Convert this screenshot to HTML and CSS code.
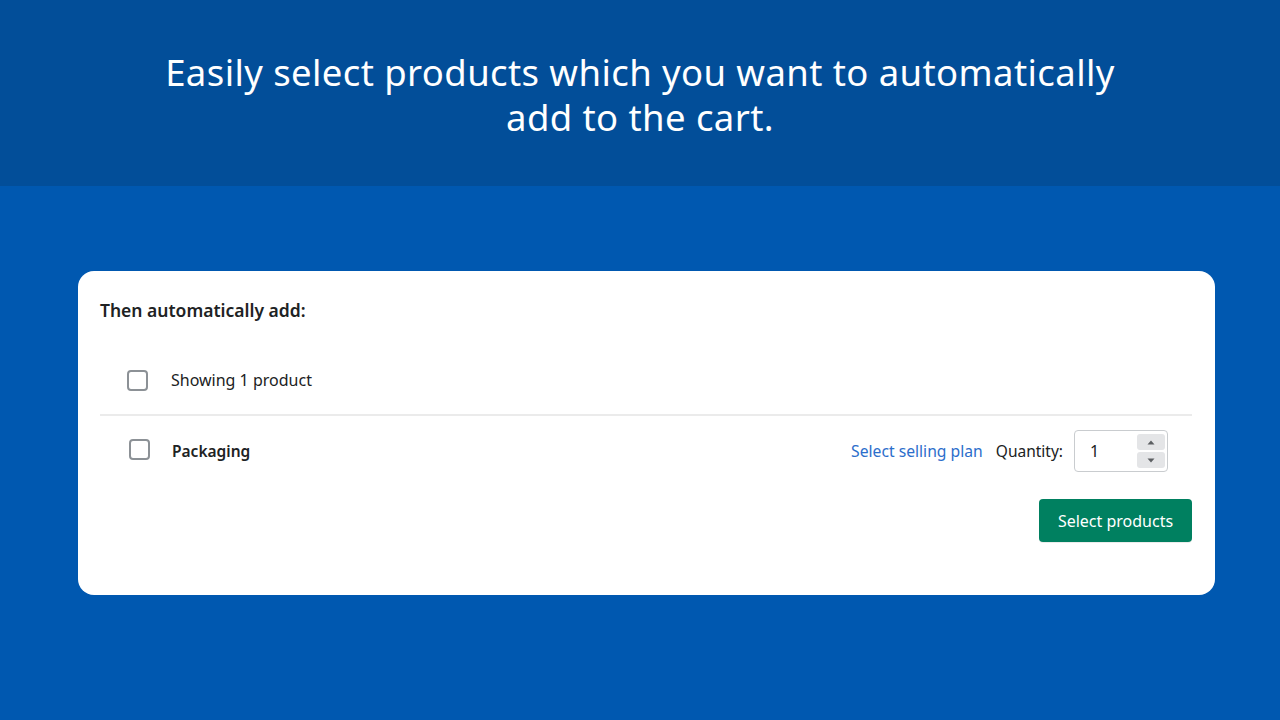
FILE: index.html
```html
<!DOCTYPE html>
<html lang="en">
<head>
    <meta charset="UTF-8">
    <meta name="viewport" content="width=device-width, initial-scale=1.0">
    <title>Auto add products</title>
    <link rel="stylesheet" href="styles.css">
</head>
<body>
    <header class="banner">
        <h1>
            <span class="bannerLine">Easily select products which you want to automatically</span>
            <span class="bannerLine">add to the cart.</span>
        </h1>
    </header>

    <main class="stage">
        <section class="card">
            <h2 class="cardTitle">Then automatically add:</h2>

            <div class="listHead">
                <span class="check"></span>
                <span class="countText">Showing 1 product</span>
            </div>

            <div class="productRow">
                <span class="check rowCheck"></span>
                <span class="productName">Packaging</span>
                <div class="rowRight">
                    <a href="#" class="planLink">Select selling plan</a>
                    <span class="qtyLabel">Quantity:</span>
                    <div class="qtyBox">
                        <span class="qtyValue">1</span>
                        <div class="spinner">
                            <span class="spinBtn">
                                <svg width="8" height="5" viewBox="0 0 8 5"><path d="M4 0.5 L7.5 4.5 H0.5 Z" fill="#5c5f62"/></svg>
                            </span>
                            <span class="spinBtn">
                                <svg width="8" height="5" viewBox="0 0 8 5"><path d="M4 4.5 L7.5 0.5 H0.5 Z" fill="#5c5f62"/></svg>
                            </span>
                        </div>
                    </div>
                </div>
            </div>

            <div class="actions">
                <button class="primaryBtn">Select products</button>
            </div>
        </section>
    </main>
</body>
</html>
```

FILE: styles.css
```css
* {
    box-sizing: border-box;
}
body {
    margin: 0;
    height: 720px;
    background-color: #0058b0;
    font-family: "Noto Sans", "Open Sans", sans-serif;
    overflow: hidden;
}
.banner {
    height: 186px;
    background-color: #024e99;
    display: flex;
    justify-content: center;
    padding-top: 50px;
}
.banner h1 {
    margin: 0;
    color: white;
    font-weight: 400;
    font-size: 36.5px;
    text-align: center;
    letter-spacing: 0.4px;
}
.bannerLine {
    display: block;
    height: 45px;
    line-height: 45px;
}
.stage {
    padding: 85px 65px 0 78px;
}
.card {
    background-color: white;
    border-radius: 16px;
    padding: 24px 23px 52px 22px;
    height: 324px;
}
.cardTitle {
    margin: 0;
    font-size: 17.5px;
    font-weight: 600;
    color: #202223;
    line-height: 30px;
}
.listHead {
    display: flex;
    align-items: center;
    margin-top: 39px;
    padding: 0 0 0 27px;
    height: 32px;
}
.check {
    width: 21px;
    height: 21px;
    border: 2px solid #8c9196;
    border-radius: 4px;
    flex-shrink: 0;
}
.rowCheck {
    margin-bottom: 4px;
}
.countText {
    margin-left: 23px;
    font-size: 16px;
    color: #202223;
}
.productRow {
    display: flex;
    align-items: center;
    margin-top: 18px;
    border-top: 2px solid #ebebeb;
    padding: 14px 24px 0 29px;
}
.productName {
    margin-left: 22px;
    font-size: 15.5px;
    font-weight: 600;
    color: #202223;
}
.rowRight {
    margin-left: auto;
    display: flex;
    align-items: center;
}
.planLink {
    color: #2c6ecb;
    text-decoration: none;
    font-size: 15.7px;
}
.qtyLabel {
    margin-left: 13px;
    font-size: 15.5px;
    color: #202223;
}
.qtyBox {
    margin-left: 11px;
    width: 94px;
    height: 42px;
    border: 1px solid #c9cccf;
    border-radius: 4px;
    display: flex;
    align-items: center;
    padding: 0 2px 0 15px;
}
.qtyValue {
    font-size: 16px;
    color: #202223;
    flex: 1;
}
.spinner {
    display: flex;
    flex-direction: column;
    gap: 2px;
}
.spinBtn {
    width: 28px;
    height: 16px;
    background-color: #e4e5e7;
    border-radius: 3px;
    display: flex;
    align-items: center;
    justify-content: center;
}
.actions {
    display: flex;
    justify-content: flex-end;
    margin-top: 27px;
}
.primaryBtn {
    background-color: #008060;
    color: white;
    border: none;
    border-radius: 4px;
    width: 153px;
    height: 43px;
    font-family: inherit;
    font-size: 16px;
    box-shadow: 0 1px 0 rgba(0, 0, 0, 0.08);
}
```
